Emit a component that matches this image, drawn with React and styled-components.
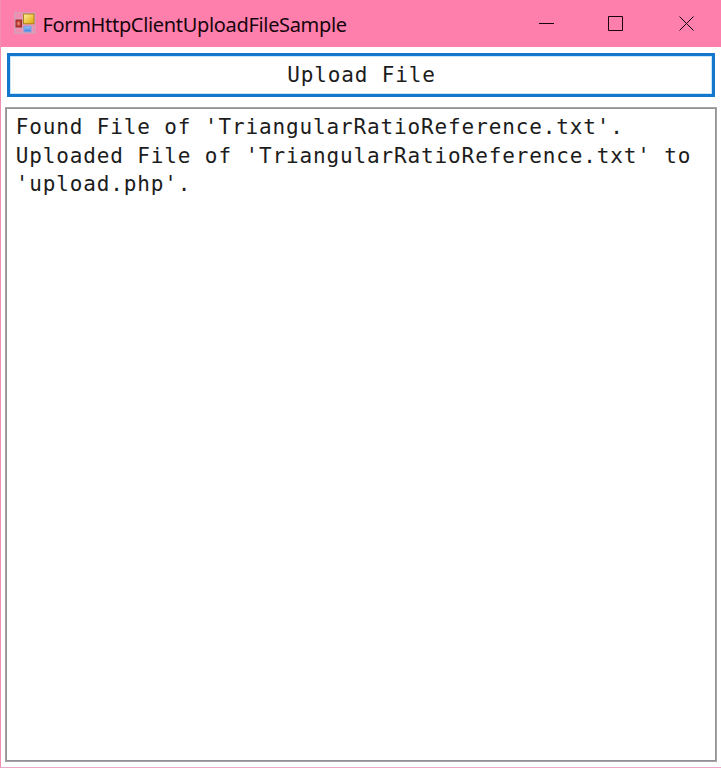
import React from "react";
import styled, { createGlobalStyle } from "styled-components";

const GlobalStyle = createGlobalStyle`
  * { box-sizing: border-box; }
  body { margin: 0; overflow: hidden; }
`;

const Window = styled.div`
  width: 721px;
  height: 768px;
  display: flex;
  flex-direction: column;
  background: #fff;
  border-left: 1px solid #f08fb2;
  border-bottom: 1px solid #e9a9c6;
`;

const TitleBar = styled.header`
  flex: none;
  height: 47px;
  display: flex;
  align-items: center;
  padding-left: 13px;
  background: #ff7fac;
`;

const AppIcon = styled.svg`
  flex: none;
  width: 23px;
  height: 23px;
`;

const Title = styled.h1`
  flex: 1;
  margin: 0 0 0 5.5px;
  font: 400 20px/28px "Noto Sans", "Open Sans", sans-serif;
  letter-spacing: -0.33px;
  white-space: nowrap;
  color: #16050c;
  padding-top: 2px;
`;

const Controls = styled.div`
  display: flex;
`;

const ControlButton = styled.button`
  width: 70px;
  height: 47px;
  padding: 0 0 0 ${(p) => p.$shift || "0"};
  border: 0;
  background: transparent;
  display: flex;
  align-items: center;
  justify-content: center;
`;

const Glyph = styled.svg`
  width: 16px;
  height: 16px;
  fill: none;
  stroke: #16050c;
`;

const Content = styled.main`
  flex: 1;
  display: flex;
  flex-direction: column;
  padding: 6px 4px 5px 4px;
`;

const UploadButton = styled.button`
  height: 44px;
  margin: 0 2px 0 2px;
  padding: 0 0 1px 1px;
  border: 3px solid #1378cd;
  outline: 0;
  background: #fff;
  box-shadow: inset 0 0 0 1px #c8e4fa;
  font: 400 21px/28px "DejaVu Sans Mono", monospace;
  letter-spacing: 0.87px;
  color: #1c1c1c;
`;

const Log = styled.div`
  flex: 1;
  margin-top: 10px;
  padding: 5px 9px 4px 9.7px;
  border: 1px solid #a4a4a6;
  background: #fff;
  box-shadow: inset 0 0 0 1px #929294;
  font: 400 21px/28.5px "DejaVu Sans Mono", monospace;
  letter-spacing: 0.87px;
  color: #1c1c1c;
  white-space: pre;
`;

const messages = [
  "Found File of 'TriangularRatioReference.txt'.",
  "Uploaded File of 'TriangularRatioReference.txt' to",
  "'upload.php'.",
];

function FormIcon() {
  return (
    <AppIcon viewBox="0 0 23 23">
      <defs>
        <linearGradient id="yellow" x1="0" y1="0" x2="1" y2="1">
          <stop offset="0" stopColor="#fff0a0" />
          <stop offset="1" stopColor="#e0a600" />
        </linearGradient>
        <linearGradient id="blue" x1="0" y1="0" x2="0" y2="1">
          <stop offset="0" stopColor="#9cc6f7" />
          <stop offset="1" stopColor="#3d7fdc" />
        </linearGradient>
      </defs>
      <path d="M1 1h20v20H1z" fill="#f28bb0" stroke="#d2a2b8" strokeWidth="1.5" />
      <path d="M1.5 6.5h7M1.5 16.5h7M8.3 1.5v20M9 13h12M18.5 13v8" stroke="#d9a3bb" />
      <rect x="2" y="8" width="5.5" height="7" fill="#bd4033" stroke="#96302a" />
      <rect x="3.5" y="10" width="2" height="3" fill="#e58c7c" />
      <rect x="9.5" y="2" width="10.5" height="9.7" fill="url(#yellow)" stroke="#b0841c" />
      <rect x="10" y="14.3" width="7" height="5.5" fill="url(#blue)" stroke="#76a4e4" />
    </AppIcon>
  );
}

export default function App() {
  return (
    <>
      <GlobalStyle />
      <Window>
        <TitleBar>
          <FormIcon />
          <Title>FormHttpClientUploadFileSample</Title>
          <Controls>
            <ControlButton aria-label="Minimize" $shift="2px">
              <Glyph viewBox="0 0 16 16"><path d="M0 7.5h15" /></Glyph>
            </ControlButton>
            <ControlButton aria-label="Maximize">
              <Glyph viewBox="0 0 16 16"><path d="M.5 .5h14v14h-14z" /></Glyph>
            </ControlButton>
            <ControlButton aria-label="Close" $shift="2px">
              <Glyph viewBox="0 0 16 16"><path d="M.5 .5l14 14M14.5 .5l-14 14" /></Glyph>
            </ControlButton>
          </Controls>
        </TitleBar>
        <Content>
          <UploadButton>Upload File</UploadButton>
          <Log>
            {messages.map((m) => (
              <div key={m}>{m}</div>
            ))}
          </Log>
        </Content>
      </Window>
    </>
  );
}
